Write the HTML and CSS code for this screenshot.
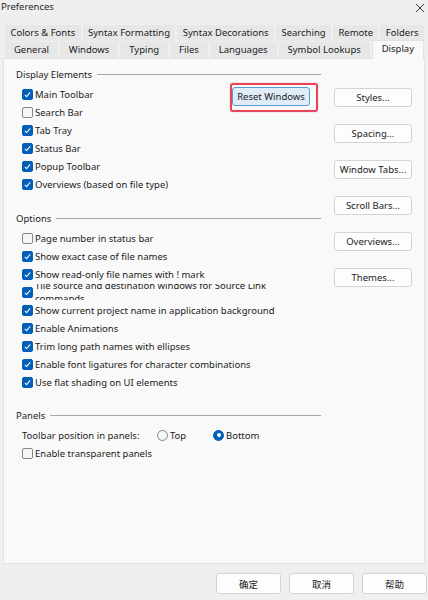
FILE: index.html
```html
<!DOCTYPE html>
<html>

<head>
    <meta charset="UTF-8">
    <link rel="stylesheet" href="styles.css">
    <title>Preferences</title>
</head>

<body>
    <div class="titlebar">
        <span class="title">Preferences</span>
        <svg class="close" width="10" height="10" viewBox="0 0 10 10">
            <path d="M1 1 L9 9 M9 1 L1 9" stroke="#3a3a3a" stroke-width="1" fill="none" />
        </svg>
    </div>

    <div class="tabs">
        <div class="tab-row">
            <div class="tab">Colors &amp; Fonts</div>
            <div class="tab">Syntax Formatting</div>
            <div class="tab">Syntax Decorations</div>
            <div class="tab">Searching</div>
            <div class="tab">Remote</div>
            <div class="tab">Folders</div>
        </div>
        <div class="tab-row">
            <div class="tab">General</div>
            <div class="tab">Windows</div>
            <div class="tab">Typing</div>
            <div class="tab">Files</div>
            <div class="tab">Languages</div>
            <div class="tab">Symbol Lookups</div>
            <div class="tab active">Display</div>
        </div>
    </div>

    <div class="panel">
        <div class="groups">
            <div class="group">
                <div class="group-title">Display Elements</div>
                <div class="display-body">
                    <div class="opts">
                        <div class="opt"><span class="box checked"></span>Main Toolbar</div>
                        <div class="opt"><span class="box"></span>Search Bar</div>
                        <div class="opt"><span class="box checked"></span>Tab Tray</div>
                        <div class="opt"><span class="box checked"></span>Status Bar</div>
                        <div class="opt"><span class="box checked"></span>Popup Toolbar</div>
                        <div class="opt"><span class="box checked"></span>Overviews (based on file type)</div>
                    </div>
                    <div class="highlight">
                        <button class="btn btn-reset">Reset Windows</button>
                    </div>
                </div>
            </div>

            <div class="group group-options">
                <div class="group-title">Options</div>
                <div class="opt"><span class="box"></span>Page number in status bar</div>
                <div class="opt"><span class="box checked"></span>Show exact case of file names</div>
                <div class="opt"><span class="box checked"></span>Show read-only file names with ! mark</div>
                <div class="opt"><span class="box checked"></span>
                    <span class="clip"><span class="two-lines">Tile source and destination windows for Source Link<br>commands</span></span>
                </div>
                <div class="opt"><span class="box checked"></span>Show current project name in application background</div>
                <div class="opt"><span class="box checked"></span>Enable Animations</div>
                <div class="opt"><span class="box checked"></span>Trim long path names with ellipses</div>
                <div class="opt"><span class="box checked"></span>Enable font ligatures for character combinations</div>
                <div class="opt"><span class="box checked"></span>Use flat shading on UI elements</div>
            </div>

            <div class="group group-panels">
                <div class="group-title">Panels</div>
                <div class="opt">
                    <span class="radio-label">Toolbar position in panels:</span>
                    <span class="radio-opt"><span class="radio"></span>Top</span>
                    <span class="radio-opt"><span class="radio checked"></span>Bottom</span>
                </div>
                <div class="opt"><span class="box"></span>Enable transparent panels</div>
            </div>
        </div>

        <div class="side">
            <button class="btn">Styles...</button>
            <button class="btn">Spacing...</button>
            <button class="btn">Window Tabs...</button>
            <button class="btn">Scroll Bars...</button>
            <button class="btn">Overviews...</button>
            <button class="btn">Themes...</button>
        </div>
    </div>

    <div class="footer">
        <button class="btn btn-footer">确定</button>
        <button class="btn btn-footer">取消</button>
        <button class="btn btn-footer">帮助</button>
    </div>
</body>

</html>
```

FILE: styles.css
```css
body {
    margin: 0;
    width: 428px;
    height: 600px;
    overflow: hidden;
    background: #efefef;
    font: 9.5px "Noto Sans", "Noto Sans CJK SC", sans-serif;
    color: #1b1b1b;
}

.titlebar {
    height: 25px;
    display: flex;
    justify-content: space-between;
    align-items: flex-start;
    padding: 0 3px 0 1px;
}

.title {
    line-height: 14px;
    color: #2a2a2a;
}

.close {
    margin-top: 3px;
}

/* tabs */
.tabs {
    margin: 0 4px 0 5px;
}

.tab-row {
    display: flex;
    gap: 2px;
    height: 16px;
}

.tab-row + .tab-row {
    margin-top: 1px;
}

.tab {
    flex: 1 1 auto;
    min-width: 0;
    padding: 0 4px;
    background: #e7e7e7;
    line-height: 16px;
    text-align: center;
    white-space: nowrap;
}

.tab.active {
    position: relative;
    z-index: 1;
    background: #f9f9f9;
    margin-top: -2px;
    height: 19px;
    line-height: 16px;
    box-sizing: border-box;
    border: 1px solid #e2e2e2;
    border-bottom: none;
}

/* main panel */
.panel {
    margin: 0 3px;
    height: 506px;
    box-sizing: border-box;
    border: 1px solid #e2e2e2;
    background: #f9f9f9;
    display: grid;
    grid-template-columns: 305px 78px;
    column-gap: 13px;
    align-items: start;
    padding: 6px 0 0 12px;
}

.group-title {
    display: flex;
    align-items: center;
    gap: 5px;
    height: 18px;
    margin-bottom: 2px;
    white-space: nowrap;
}

.group-title::after {
    content: "";
    flex: 1;
    height: 1px;
    background: #a9a9a9;
}

.group-options {
    margin-top: 16px;
}

.group-panels {
    margin-top: 15px;
}

.display-body {
    display: flex;
    justify-content: space-between;
    align-items: flex-start;
}

.opt {
    display: flex;
    align-items: center;
    height: 18px;
    padding-left: 6px;
    gap: 2px;
    white-space: nowrap;
}

.box {
    flex: none;
    position: relative;
    width: 11px;
    height: 11px;
    box-sizing: border-box;
    border: 1px solid #868686;
    border-radius: 2px;
    background: #f6f6f6;
}

.box.checked {
    border-color: #005fb8;
    background: #005fb8;
}

.box.checked::after {
    content: "";
    position: absolute;
    left: 3px;
    top: 1px;
    width: 2px;
    height: 5px;
    border: solid #fff;
    border-width: 0 1px 1px 0;
    transform: rotate(40deg);
}

.clip {
    display: flex;
    align-items: center;
    height: 16px;
    overflow: hidden;
}

.two-lines {
    line-height: 13px;
}

.radio-label {
    width: 133px;
}

.radio-opt {
    display: flex;
    align-items: center;
    gap: 2px;
    width: 54px;
}

.radio {
    position: relative;
    width: 11px;
    height: 11px;
    box-sizing: border-box;
    border: 1px solid #868686;
    border-radius: 50%;
    background: #f6f6f6;
}

.radio.checked {
    border-color: #005fb8;
    background: #005fb8;
}

.radio.checked::after {
    content: "";
    position: absolute;
    left: 2.5px;
    top: 2.5px;
    width: 4px;
    height: 4px;
    border-radius: 50%;
    background: #fff;
}

/* buttons */
.btn {
    width: 78px;
    height: 19px;
    padding: 0;
    box-sizing: border-box;
    border: 1px solid #d3d3d3;
    border-radius: 3px;
    background: #fdfdfd;
    font: inherit;
    color: #1b1b1b;
}

.highlight {
    margin: -2px 3px 0 0;
    padding: 2px 6px 4px 0;
    border: 2px solid #e8435a;
    border-radius: 3px;
    box-shadow: 0 0 2px rgba(232, 67, 90, 0.35);
}

.btn-reset {
    display: block;
    background: #e0ecf8;
    border-color: #5a9ad6;
}

.side {
    display: flex;
    flex-direction: column;
    gap: 17px;
    margin-top: 23px;
}

.footer {
    display: flex;
    justify-content: flex-end;
    gap: 8px;
    padding: 9px 1px 0 0;
}

.btn-footer {
    width: 65px;
    height: 21px;
    font-family: "Noto Sans CJK SC", sans-serif;
}
```
